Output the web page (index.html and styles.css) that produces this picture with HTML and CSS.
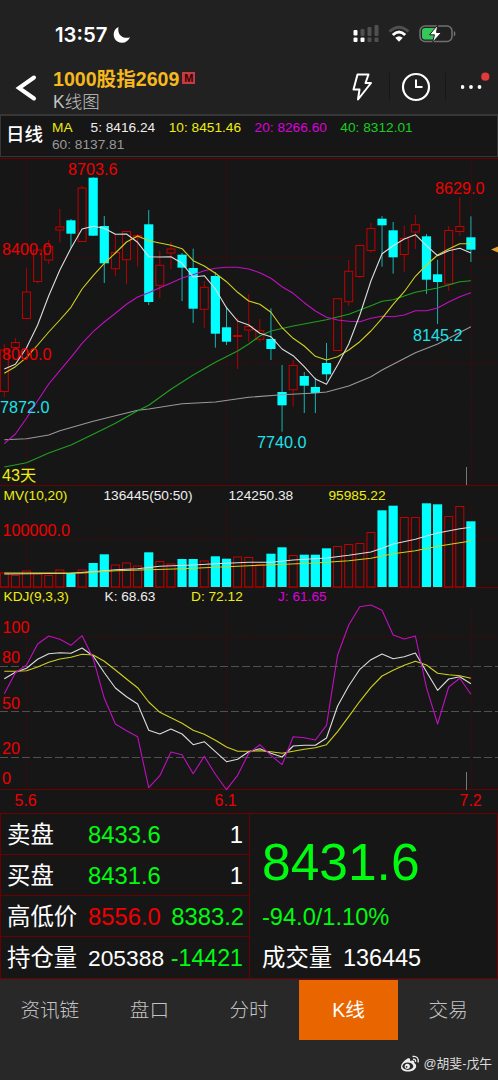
FILE: index.html
```html
<!DOCTYPE html>
<html lang="zh-CN">
<head>
    <meta charset="UTF-8">
    <meta name="viewport" content="width=device-width, initial-scale=1.0">
    <title>1000股指2609 - K线图</title>
    <link rel="stylesheet" href="styles.css">
</head>
<body>
    <div class="status-bar">
        <span class="time">13:57</span>
        <svg class="moon" width="18" height="18" viewBox="0 0 18 18"><path d="M5.500 1C-0.500 3.500 -1 12 4.500 15.500C9 18.300 15 16.500 17 11.300C11.500 13.300 3.800 10 5.500 1z" fill="#fff"/></svg>
        <div class="status-icons">
            <svg width="27" height="20" viewBox="0 0 27 20">
                <g fill="#505050">
                    <rect x="7.500" y="5" width="4" height="7" rx="1"/>
                    <rect x="14.500" y="3" width="4" height="9" rx="1"/>
                    <rect x="21.500" y="1" width="4" height="11" rx="1"/>
                    <rect x="14.500" y="13.500" width="4" height="4.500" rx="1"/>
                    <rect x="21.500" y="13.500" width="4" height="4.500" rx="1"/>
                </g>
                <g fill="#fff">
                    <rect x="0.500" y="6" width="4" height="5.500" rx="1"/>
                    <rect x="0.500" y="13.500" width="4" height="4.500" rx="1"/>
                    <rect x="7.500" y="13.500" width="4" height="4.500" rx="1"/>
                </g>
            </svg>
            <svg width="22" height="18" viewBox="0 0 22 18" fill="none">
                <path d="M1.500 6.500Q11 -2 20.500 6.500" stroke="#505050" stroke-width="3"/>
                <path d="M4.800 10Q11 4 17.200 10" stroke="#fff" stroke-width="3"/>
                <path d="M7.200 12.800Q11 9.500 14.800 12.800L11 16.800z" fill="#fff"/>
            </svg>
            <svg class="battery" width="37" height="20" viewBox="0 0 37 20">
                <rect x="1" y="2" width="32" height="15.500" rx="5" fill="none" stroke="#707070" stroke-width="1.500"/>
                <path d="M6 4H16V15.500H6Q3 15.500 3 12.500V7Q3 4 6 4z" fill="#34c759"/>
                <path d="M34.800 7V12.500Q36.500 12 36.500 9.700Q36.500 7.500 34.800 7z" fill="#707070"/>
                <path d="M18.800 1L10.500 10.800H15.500L13.500 18.500L22.500 8.500H17.500z" fill="#fff" stroke="#212121" stroke-width="1"/>
            </svg>
        </div>
    </div>
    <header>
        <svg class="back" width="22" height="28" viewBox="0 0 22 28"><path d="M19 3.500L4 14L19 24.500" fill="none" stroke="#fff" stroke-width="4" stroke-linecap="round"/></svg>
        <div class="title">
            <h1>1000股指2609<span class="tag">M</span></h1>
            <p>K线图</p>
        </div>
        <nav>
            <svg width="24" height="30" viewBox="0 0 24 30"><path d="M7.500 2.500H18.500L15.500 11H21L8 27.500L9.500 17.500H3.500L7.500 2.500z" fill="none" stroke="#fff" stroke-width="2" stroke-linejoin="round"/></svg>
            <i></i>
            <svg width="30" height="30" viewBox="0 0 30 30"><circle cx="15" cy="15" r="13" fill="none" stroke="#fff" stroke-width="2.200"/><path d="M15 7.500V15H21.500" fill="none" stroke="#fff" stroke-width="2"/></svg>
            <i></i>
            <svg class="more" width="32" height="30" viewBox="0 0 32 30"><g fill="#fff"><circle cx="1.500" cy="15" r="1.900"/><circle cx="10" cy="15" r="1.900"/><circle cx="18.500" cy="15" r="1.900"/></g><circle cx="24.300" cy="4.700" r="4.100" fill="#e03a3a"/></svg>
        </nav>
    </header>
    <div class="ma-bar">
        <strong>日线</strong>
        <div class="ma-list">
            <span class="yellow name">MA</span>
            <span class="white">5: 8416.24</span>
            <span class="yellow">10: 8451.46</span>
            <span class="magenta">20: 8266.60</span>
            <span class="green">40: 8312.01</span>
            <span class="gray">60: 8137.81</span>
        </div>
    </div>

    <svg id="price" class="chart" viewBox="0 157 498 329">
        <path class="frame" d="M0 158.500H498M0 485.500H498"/>
        <path class="grid" d="M0 257.500H498M0 363.500H498M26.500 160V480M226.500 160V480M471.500 160V480"/>
        <path class="tick" d="M466.500 467V485"/>
        <path d="M491 249.500L498 246.500V252.500z" fill="#e0a030"/>
        <g class="plot"></g>
        <g class="label red">
            <text x="68" y="175">8703.6</text>
            <text x="435" y="194">8629.0</text>
            <text x="2" y="254.500">8400.0</text>
            <text x="2" y="360">8000.0</text>
        </g>
        <g class="label cyan">
            <text x="0" y="413">7872.0</text>
            <text x="257" y="448">7740.0</text>
            <text x="413" y="341">8145.2</text>
        </g>
        <text class="label yellow" x="2" y="481">43天</text>
    </svg>
    <svg id="volume" class="chart" viewBox="0 486 498 102">
        <path class="frame" d="M0 587.500H498"/>
        <path class="grid" d="M0 539.500H498M26.500 503V587M226.500 503V587M471.500 503V587"/>
        <g class="plot"></g>
        <g class="legend">
            <text class="yellow" x="3.500" y="499.500">MV(10,20)</text>
            <text class="white" x="103.500" y="499.500">136445(50:50)</text>
            <text class="white" x="228.500" y="499.500">124250.38</text>
            <text class="yellow" x="328.500" y="499.500">95985.22</text>
        </g>
        <text class="label red" x="2.500" y="536">100000.0</text>
    </svg>
    <svg id="kdj" class="chart" viewBox="0 588 498 226">
        <path class="frame" d="M0 789.500H498M0 813.500H498"/>
        <path class="grid" d="M0 636.500H498M26.500 606V789M226.500 606V789M471.500 606V789"/>
        <path class="level" d="M0 666.500H498M0 711.500H498M0 757.500H498"/>
        <path class="tick" d="M466.500 772V790"/>
        <g class="plot"></g>
        <g class="legend">
            <text class="yellow" x="3.500" y="601">KDJ(9,3,3)</text>
            <text class="white" x="104.500" y="601">K: 68.63</text>
            <text class="yellow" x="191" y="601">D: 72.12</text>
            <text class="magenta" x="278" y="601">J: 61.65</text>
        </g>
        <g class="label red">
            <text x="2.500" y="633">100</text>
            <text x="2" y="663">80</text>
            <text x="2" y="708.500">50</text>
            <text x="2" y="754">20</text>
            <text x="2" y="784">0</text>
        </g>
        <g class="label date red">
            <text x="14.500" y="806">5.6</text>
            <text x="214.500" y="806">6.1</text>
            <text x="459.500" y="806">7.2</text>
        </g>
    </svg>

    <div class="quote">
        <div class="rows">
            <div class="row"><b>卖盘</b><span class="lime">8433.6</span><span class="last">1</span></div>
            <div class="row"><b>买盘</b><span class="lime">8431.6</span><span class="last">1</span></div>
            <div class="row"><b>高低价</b><span class="red">8556.0</span><span class="last lime low">8383.2</span></div>
            <div class="row"><b>持仓量</b><span class="open">205388</span><span class="last lime diff">-14421</span></div>
        </div>
        <div class="summary">
            <div class="big lime">8431.6</div>
            <div class="change lime">-94.0/1.10%</div>
            <div class="total"><b>成交量</b><span>136445</span></div>
        </div>
    </div>
    <footer>
        <div class="tabs">
            <a>资讯链</a>
            <a>盘口</a>
            <a>分时</a>
            <a class="active">K线</a>
            <a>交易</a>
        </div>
        <div class="author">
            <svg width="20" height="18" viewBox="0 0 20 18">
                <path d="M7.500 3.500C9.500 2.500 10.700 3.700 10 6C13 4.800 15 5.800 14.200 8C18 9.500 16.500 16.500 8 16.500C-1.500 16.500 -1 8.500 7.500 3.500z" fill="#eee"/>
                <ellipse cx="7.800" cy="11.200" rx="5.400" ry="3.700" fill="#282828"/>
                <circle cx="7.300" cy="11.300" r="2.600" fill="#eee"/>
                <circle cx="6.600" cy="11.800" r="0.900" fill="#282828"/>
                <path d="M12.500 1.500C16.500 0.500 19.200 3.500 18 7.500M13 4.300C15 3.900 16 5 15.500 6.800" fill="none" stroke="#eee" stroke-width="1.300"/>
            </svg>
            <span>@胡斐-戊午</span>
        </div>
    </footer>
    <script src="chart.js"></script>
</body>
</html>
```
FILE: styles.css
```css
body {
    margin: 0;
    width: 498px;
    height: 1080px;
    overflow: hidden;
    background-color: #161616;
    color: #fff;
    font-family: "Liberation Sans", "Noto Sans CJK SC", sans-serif;
}
.status-bar {
    display: flex;
    align-items: center;
    height: 68px;
    padding-left: 55px;
    background-color: #212121;
    box-sizing: border-box;
}
.time {
    font-family: Inter, sans-serif;
    font-size: 20.3px;
    font-weight: 600;
    width: 58px;
}
.moon {
    margin-top: 1px;
}
.status-icons {
    display: flex;
    align-items: center;
    gap: 8px;
    margin-left: 222px;
}
.battery {
    margin-left: 1px;
}
header {
    display: flex;
    height: 46px;
    background-color: #212121;
}
.back {
    margin: 6px 0 0 15px;
}
.title {
    margin-left: 16px;
    width: 294px;
}
h1 {
    display: flex;
    align-items: center;
    margin: -2px 0 0;
    height: 23px;
    font-size: 19.6px;
    color: #f5b81d;
}
.tag {
    width: 13px;
    height: 12px;
    margin-left: 3px;
    background-color: #c43c40;
    color: #300;
    font-size: 11px;
    line-height: 13px;
    text-align: center;
}
.title p {
    margin: 1px 0 0;
    font-size: 17.5px;
    line-height: 24px;
    font-weight: 300;
    color: #c4c4c4;
}
nav {
    display: flex;
    align-items: center;
    height: 38px;
    margin-left: 3px;
}
nav i {
    width: 1px;
    height: 28px;
    margin: 0 11px 0 15px;
    background-color: #171717;
}
nav i + svg {
    margin-right: -1px;
}
nav .more {
    margin-left: 4px;
}
.ma-bar {
    display: flex;
    align-items: center;
    height: 43px;
    box-sizing: border-box;
    border: 1px solid #363636;
    border-top-width: 2px;
    background-color: #161616;
    font-size: 13.7px;
}
.ma-bar strong {
    width: 46px;
    padding-left: 5px;
    font-size: 18.500px;
    font-weight: 500;
    line-height: 36px;
    margin-top: -2px;
}
.ma-list {
    display: flex;
    flex-wrap: wrap;
    column-gap: 13.5px;
    line-height: 17px;
    width: 440px;
}
.name {
    margin-right: 4.5px;
}
.yellow { color: #eeee10; fill: #eeee10; }
.white { color: #eee; fill: #eee; }
.magenta { color: #dd00dd; fill: #dd00dd; }
.green { color: #16d020; fill: #16d020; }
.gray { color: #999; fill: #999; }
.red { color: #ee0000; fill: #ee0000; }
.cyan { color: #20e0e8; fill: #20e0e8; }
.lime { color: #00fa10; }

.chart {
    display: block;
    width: 498px;
}
.label {
    font-size: 16.2px;
}
.date {
    font-size: 16px;
}
.legend {
    font-size: 13.7px;
}
.frame {
    stroke: #6c0000;
    shape-rendering: crispEdges;
}
.grid {
    stroke: #4c0505;
    stroke-dasharray: 2 1;
    stroke-opacity: 0.75;
}
.level {
    stroke: #505050;
    stroke-dasharray: 8 3;
}
.tick {
    stroke: #777;
}
.up {
    fill: #161616;
    stroke: #c40000;
}
.up-wick {
    stroke: #b00000;
}
.down {
    fill: #00ffff;
}
.down-wick {
    stroke: #14b4b4;
}
.line {
    fill: none;
    stroke-width: 1.1;
    stroke-linejoin: round;
}
.quote {
    display: flex;
    height: 165px;
    box-sizing: border-box;
    border: 1px solid #6c0000;
    border-top: none;
    font-size: 23.8px;
}
.rows {
    width: 248px;
    border-right: 1px solid #6c0000;
}
.row {
    display: flex;
    align-items: center;
    height: 41px;
    box-sizing: border-box;
    padding: 1px 6px 0;
    border-bottom: 1px solid #6c0000;
}
.row:last-child {
    border-bottom: none;
}
.row b, .total b {
    width: 81px;
    font-size: 23.4px;
    line-height: 36px;
    font-weight: 400;
}
.last {
    margin-left: auto;
}
.low {
    margin-right: -1px;
}
.open {
    font-size: 22.8px;
}
.diff {
    font-size: 23.2px;
}
.summary {
    padding-left: 12px;
}
.big {
    margin-top: 17px;
    height: 66px;
    line-height: 62px;
    font-size: 51.500px;
}
.change {
    height: 40px;
    line-height: 40px;
    font-size: 23.6px;
}
.total {
    display: flex;
    align-items: center;
    height: 42px;
    font-size: 23.4px;
}
footer {
    height: 101px;
    background-color: #282828;
}
.tabs {
    display: flex;
    padding-top: 1px;
}
.tabs a {
    flex: 1;
    height: 60px;
    line-height: 60px;
    text-align: center;
    font-size: 19.6px;
    font-weight: 300;
    color: #c4c4c4;
}
.tabs .active {
    background-color: #e96500;
    color: #fff;
    font-weight: 400;
}
.author {
    display: flex;
    align-items: center;
    justify-content: flex-end;
    gap: 4px;
    height: 20px;
    margin-top: 9px;
    padding: 5px 6px 0 0;
    font-size: 12.8px;
    line-height: 20px;
    color: #ddd;
}
```
FILE: chart.js
```js
const STEP = 11.11;
const START = 4.3;
const BASE = 587;

// direction, high, body top, body bottom, low, volume top
const candles = [
    ['u', 344, 350, 391.5, 397, 573], ['u', 338, 342.5, 347.5, 349, 575.5], ['u', 268.5, 292, 318.5, 319, 571],
    ['u', 248, 250, 281.5, 283.5, 574], ['u', 240, 246.5, 260, 264, 575.5], ['u', 209, 227, 230, 242.5, 570],
    ['d', 219, 220.3, 233.7, 248, 573.3], ['u', 186, 188, 241.5, 242, 570], ['d', 177, 177.7, 235.7, 236, 563],
    ['d', 216, 226, 263.3, 283, 554.3], ['u', 234, 252.5, 268.7, 276, 565], ['u', 231, 231.5, 259.7, 284, 563],
    ['u', 234, 235.5, 237.7, 266.7, 566], ['d', 210, 224.3, 302, 305, 552.3], ['u', 251, 265.3, 285.3, 298, 561.5],
    ['u', 242, 249, 253, 269, 564], ['d', 253, 254.7, 267.7, 301, 559], ['d', 248.7, 268, 308.7, 323, 559],
    ['u', 281, 287.3, 309.3, 328, 561], ['d', 272, 276, 333.7, 347.7, 556.3], ['d', 306.7, 327.3, 341.7, 345, 558.7],
    ['u', 318, 335.5, 336.5, 369, 557], ['u', 294, 326.5, 330, 341.7, 557.5], ['u', 319, 330.7, 339.3, 341.7, 564.5],
    ['d', 308.3, 339, 349, 360, 553.7], ['d', 365, 392, 405.3, 431.7, 547.3], ['u', 360, 365.5, 389.7, 406.7, 555.5],
    ['d', 372, 376, 385.7, 413, 554.7], ['d', 377.7, 387, 393, 413, 554.7], ['d', 343, 363, 374.3, 380.7, 548.3],
    ['u', 298, 298.7, 350.5, 351, 546.5], ['u', 260, 271.3, 301.7, 306, 544.5], ['u', 245, 245.5, 276.5, 278, 543.5],
    ['u', 223, 228.5, 250.5, 252.7, 532.5], ['d', 216, 218.7, 225.3, 266.7, 510.3], ['d', 222, 230.3, 257.3, 273.7, 505.7],
    ['u', 226, 238.5, 254.5, 272, 517.5], ['u', 215, 224.7, 232, 249, 517.5], ['d', 234, 236.3, 279.7, 294, 503.3],
    ['d', 259.7, 274.3, 282, 324, 504.3], ['u', 226, 230.5, 284, 291, 516.5], ['u', 197.3, 226.5, 231.5, 235.7, 506.5],
    ['d', 216.3, 237.3, 249.7, 262, 521.3]
];

const ma5 = [369, 364.3, 347.7, 325, 295.7, 270, 248.3, 229, 226.3, 228.3, 234.3, 234, 242.3, 256.7, 257, 256.7, 263.3, 277, 275.7, 289, 307.7, 321, 325, 333.3, 336.7, 349, 355.7, 366.7, 379, 384.3, 365, 344, 315, 281, 253.7, 245.7, 239, 234.7, 245.7, 255.7, 250.7, 248.3, 253];
const ma10 = [373.3, 366.7, 357.3, 345, 332, 320, 307.3, 289, 275.7, 263.3, 253, 242, 236, 240.7, 243, 245.3, 248.7, 260.7, 266, 273.3, 281.7, 292.3, 301, 304.3, 312.3, 327.7, 338.3, 346, 356.3, 360, 356.7, 350, 341.7, 331, 318.3, 304.3, 291.7, 276.3, 265, 255, 249, 243.7, 243.7];
const ma20 = [443.7, 434, 418.3, 400.7, 384, 370.7, 357.3, 343.3, 331.7, 322, 313.3, 304.3, 297, 292.7, 287.7, 283, 278, 274.7, 270.7, 268.3, 267.3, 267.3, 269, 272.7, 278.3, 286.7, 293.3, 302.7, 311, 317.3, 320, 321.3, 321.7, 318.3, 316.3, 316.7, 315, 310.7, 310.7, 308, 302, 296.7, 292.7];
const k = [678.7, 672.3, 668.3, 659.3, 653.7, 652.7, 653.3, 648, 656, 672.7, 688, 696.7, 704, 730.3, 734, 729, 734, 744.7, 741.7, 751.7, 761.7, 759.3, 751.7, 748.7, 753.3, 757, 746, 745.3, 745.3, 738, 706, 686, 669.3, 659.7, 654, 658.7, 656.7, 653, 671.7, 690.3, 679, 676.7, 683.7];
const d = [671.3, 671.3, 670.7, 667, 662.3, 659, 657.3, 654.3, 655, 661.3, 670, 679, 687.7, 702, 712.3, 717.7, 723.3, 730.3, 734.3, 740.3, 747, 751.3, 751.3, 750.7, 751.7, 753.3, 751.3, 749.3, 747.7, 744.7, 731.7, 716.7, 701.3, 687.3, 676, 670.3, 665.3, 661.3, 665, 673.3, 674.7, 675.7, 678.3];
const j = [693.7, 672.7, 665, 644, 636, 639.3, 645.3, 635.7, 658.3, 698.3, 724, 730.7, 736.7, 787.7, 775.7, 752, 754.7, 773.7, 756.3, 774.3, 789.7, 775.3, 753.3, 744.7, 755.3, 764.7, 736.7, 737.7, 740, 725.3, 655, 625, 606.7, 605, 610.3, 635, 639, 636, 687.7, 724, 687, 678.3, 694.3];

// slow averages only need [index, y] at the bends
const ma40 = [[0, 467], [2, 462.7], [4, 453], [6, 445], [8, 434.3], [10, 423.3], [12, 410.7], [13, 405.3], [15, 389.3], [17, 375], [19, 362.3], [21, 351], [22, 344], [23, 336], [24, 331], [26, 326], [29, 319.7], [31, 314.3], [33, 305.7], [34, 301.3], [35, 299.7], [37, 292.3], [39, 288], [41, 281.7], [42, 280.7]];
const ma60 = [[0, 439.7], [2, 438.7], [4, 435], [5, 430.7], [8, 421.3], [12, 410.3], [13, 409], [16, 403.7], [19, 402], [22, 397.3], [25, 394.7], [28, 393], [29, 392], [31, 386], [33, 376.7], [34, 370], [37, 352.7], [39, 344], [42, 326.7]];
const mv10 = [[0, 574], [6, 573.3], [9, 570.7], [10, 569.7], [12, 568.7], [14, 566.3], [17, 565], [19, 563.7], [22, 562.3], [24, 562.3], [26, 560], [29, 558], [31, 555.3], [33, 552], [34, 548.3], [35, 544], [37, 539.3], [38, 536], [39, 533], [41, 528.7], [42, 527.3]];
const mv20 = [[0, 573], [7, 573], [10, 570.7], [16, 568.7], [22, 565.7], [28, 563], [31, 560.7], [33, 558.3], [35, 553.7], [37, 550.7], [39, 546.3], [41, 542.7], [42, 541]];

function xAt(i) {
    return START + i * STEP;
}

function line(data, color) {
    const points = data.map((p, i) => Array.isArray(p) ? `${xAt(p[0])},${p[1]}` : `${xAt(i)},${p}`);
    return `<polyline class="line" stroke="${color}" points="${points.join(' ')}"/>`;
}

function box(type, x, top, bottom) {
    if (type === 'u') {
        return `<rect class="up" x="${x - 4}" y="${top}" width="8" height="${bottom - top}"/>`;
    }
    return `<rect class="down" x="${x - 4.6}" y="${top}" width="9.2" height="${bottom - top}"/>`;
}

let price = '';
let volume = '';
candles.forEach(([type, high, top, bottom, low, vol], i) => {
    const x = xAt(i);
    const wick = type === 'u' ? 'up-wick' : 'down-wick';
    price += `<path class="${wick}" d="M${x} ${high}V${low}"/>` + box(type, x, top, bottom);
    volume += box(type, x, vol, BASE);
});

price += line(ma60, '#999') + line(ma40, '#20a020') + line(ma20, '#c010c0') + line(ma10, '#d0d020') + line(ma5, '#ddd');
volume += line(mv10, '#ddd') + line(mv20, '#d0d020');

document.querySelector('#price .plot').innerHTML = price;
document.querySelector('#volume .plot').innerHTML = volume;
document.querySelector('#kdj .plot').innerHTML = line(k, '#ddd') + line(d, '#d0d020') + line(j, '#c010c0');
```
